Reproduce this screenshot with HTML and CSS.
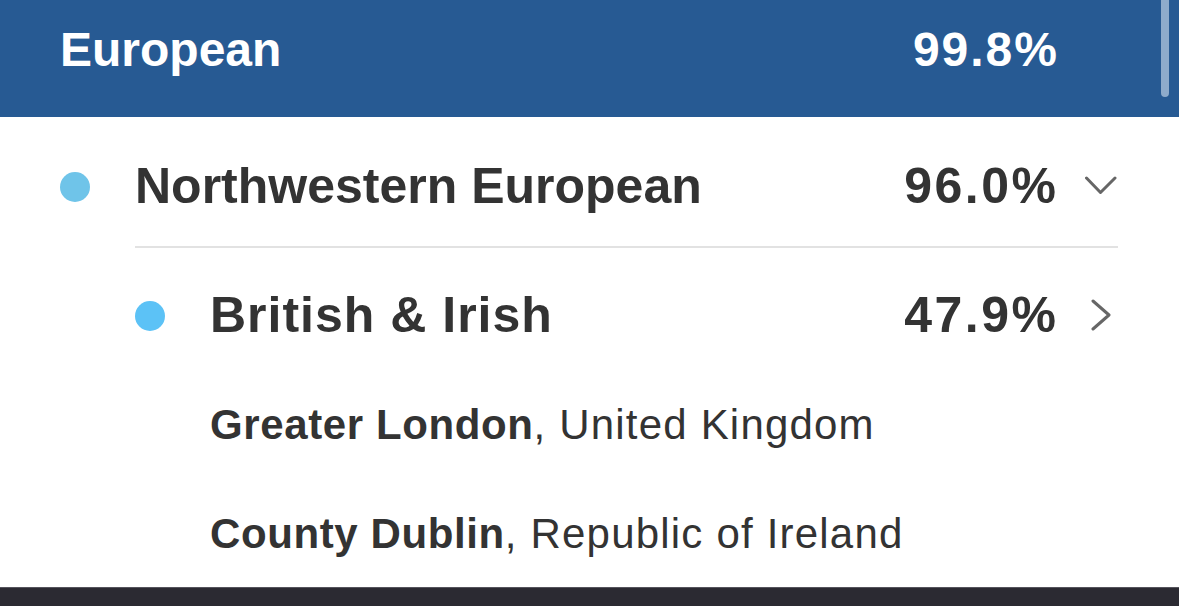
FILE: index.html
```html
<!DOCTYPE html>
<html lang="en">
<head>
<meta charset="utf-8">
<title>Ethnicity estimate</title>
<link rel="stylesheet" href="styles.css">
</head>
<body>
<div class="page">
  <header class="region-head">
    <span class="region-name">European</span>
    <span class="region-pct">99.8%</span>
    <span class="scroll-thumb"></span>
  </header>
  <main class="list">
    <div class="row row-main">
      <span class="dot dot-nw"></span>
      <span class="row-name">Northwestern European</span>
      <span class="row-pct">96.0%</span>
      <svg class="chev" width="32" height="32" viewBox="0 0 32 32" aria-hidden="true"><polyline points="1.5,8 15.5,22.5 30,8" fill="none" stroke="#666" stroke-width="3" stroke-linecap="round" stroke-linejoin="round"/></svg>
    </div>
    <div class="sub">
      <div class="divider"></div>
      <div class="row row-sub">
        <span class="dot dot-bi"></span>
        <span class="row-name sub-name">British &amp; Irish</span>
        <span class="row-pct">47.9%</span>
        <svg class="chev" width="32" height="32" viewBox="0 0 32 32" aria-hidden="true"><polyline points="8,2 24,16 8,30" fill="none" stroke="#666" stroke-width="3" stroke-linecap="round" stroke-linejoin="round"/></svg>
      </div>
      <div class="places">
        <p class="place place-1"><b>Greater London</b>, United Kingdom</p>
        <p class="place place-2"><b>County Dublin</b>, Republic of Ireland</p>
      </div>
    </div>
  </main>
  <footer class="bottom-bar"></footer>
</div>
</body>
</html>
```

FILE: styles.css
```css
html, body {
  margin: 0;
  padding: 0;
  background: #ffffff;
}

.page {
  width: 1179px;
  height: 606px;
  display: flex;
  flex-direction: column;
  overflow: hidden;
  font-family: "Liberation Sans", Arial, sans-serif;
  color: #333333;
}

.region-head {
  position: relative;
  height: 117px;
  box-sizing: border-box;
  flex: none;
  display: flex;
  align-items: flex-start;
  padding: 26px 122px 0 60px;
  background: #275a93;
  color: #ffffff;
  font-weight: 700;
  font-size: 48px;
  line-height: 48px;
}

.region-name {
  flex: 1;
}

.region-pct {
  letter-spacing: 2px;
  margin-right: -2px;
}

.scroll-thumb {
  position: absolute;
  right: 10px;
  top: -10px;
  width: 8px;
  height: 107px;
  border-radius: 4px;
  background: #8eabcb;
}

.list {
  flex: 1;
  display: flex;
  flex-direction: column;
  padding: 0 61px 0 60px;
}

.row {
  display: flex;
  align-items: center;
  font-size: 50px;
  line-height: 50px;
  font-weight: 700;
}

.row-main {
  padding: 44px 0 35px;
}

.dot {
  flex: none;
  width: 30px;
  height: 30px;
  border-radius: 50%;
  margin-top: 2px;
}

.dot-nw {
  background: #6fc4e9;
}

.dot-bi {
  background: #5cc2f6;
}

.row-name {
  flex: 1;
  margin-left: 45px;
}

.sub-name {
  letter-spacing: 1px;
}

.row-pct {
  letter-spacing: 2.5px;
  margin-right: -2.5px;
}

.chev {
  flex: none;
  margin-left: 29px;
  margin-right: 1px;
}

.sub {
  margin-left: 75px;
  display: flex;
  flex-direction: column;
}

.divider {
  height: 2px;
  background: #e2e2e2;
}

.row-sub {
  padding-top: 42px;
}

.places {
  padding-left: 75px;
}

.place {
  margin: 0;
  font-size: 42px;
  line-height: 42px;
  font-weight: 400;
  letter-spacing: 1.2px;
  color: #333333;
}

.place b {
  font-weight: 700;
  letter-spacing: 0.6px;
}

.place-1 {
  margin-top: 64px;
}

.place-2 {
  margin-top: 67px;
}

.bottom-bar {
  flex: none;
  height: 19px;
  background: #2b2a32;
  border-top: 1px solid #55545c;
  box-sizing: border-box;
}
```
